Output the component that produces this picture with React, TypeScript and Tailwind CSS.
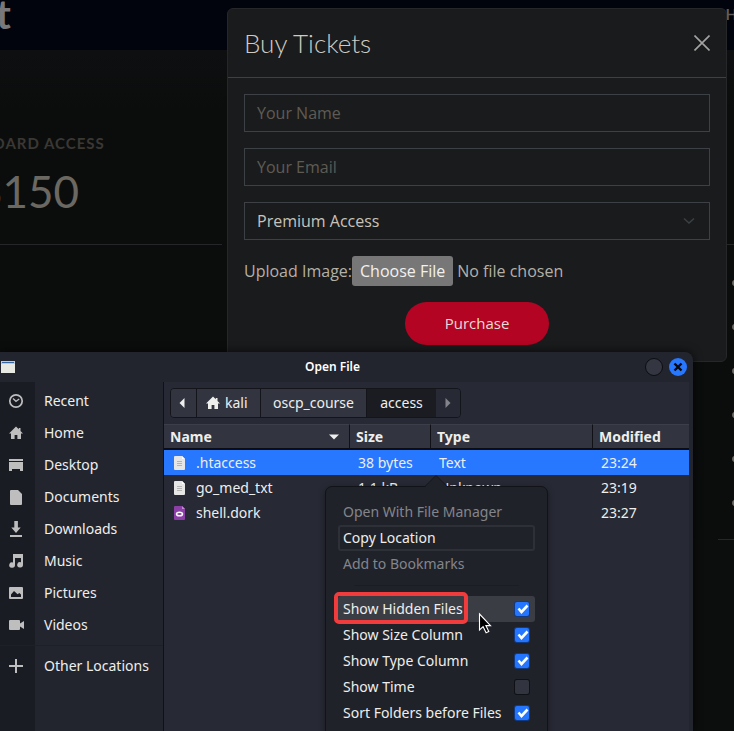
import React from "react";

const places = ["Recent", "Home", "Desktop", "Documents", "Downloads", "Music", "Pictures", "Videos"];

function PlaceIcon({ name }: { name: string }) {
  return (
    <svg aria-hidden="true" viewBox="0 0 16 16" className="size-4 shrink-0" fill="#bebebe">
      {name === "Recent" && (
        <g fill="none" stroke="#bebebe">
          <circle cx="8" cy="8" r="6.2" strokeWidth="1.7" />
          <path d="M5 5.5 8 8.3 11.2 6" strokeWidth="1.3" />
        </g>
      )}
      {name === "Home" && <path d="M8 1.5 1 8.4h2V14h3.6v-4h2.8v4H13V8.4h2L12.5 6V3h-1.7v1.3z" />}
      {name === "Desktop" && <path d="M1 2h14v2H1zM1 5h14v9h-3v-2H4v2H1z" />}
      {name === "Documents" && <path d="M3 1h7l4 4v10a1 1 0 0 1-1 1H3a1 1 0 0 1-1-1V2a1 1 0 0 1 1-1z" />}
      {name === "Downloads" && <path d="M6.3 0h3.6v6.5h2.8L8 12 3.3 6.5h3zM2 14h12v2H2z" />}
      {name === "Music" && <path d="M5 1h10v10.6a2.9 2.7 0 1 1-2-2.4V5H7v7a2.9 2.7 0 1 1-2-2.6z" />}
      {name === "Pictures" && (
        <path fillRule="evenodd" d="M2 2h12q1 0 1 1v10q0 1-1 1H2q-1 0-1-1V3q0-1 1-1zM3 12h10V9.5L11.3 8 9.6 9.2 6 6 3 9.5z" />
      )}
      {name === "Videos" && <path d="M2 3h9q1 0 1 1v2.6L16 4v8l-4-2.600V12q0 1-1 1H2q-1 0-1-1V4q0-1 1-1z" />}
      {name === "Other Locations" && <path d="M7 1h2v6h6v2H9v6H7V9H1V7h6z" />}
    </svg>
  );
}

function FileIcon({ purple }: { purple?: boolean }) {
  return (
    <svg aria-hidden="true" viewBox="0 0 12 14" className="h-3.5 w-3 shrink-0">
      <path d="M1 0h7l3 3v10q0 1-1 1H1q-1 0-1-1V1q0-1 1-1z" fill={purple ? "#8d3fa8" : "#e6e6e6"} />
      <path d="M8 0l3 3H8z" fill={purple ? "#c48bd6" : "#fff"} />
      {purple ? (
        <ellipse cx="5.500" cy="8" rx="3" ry="1.800" fill="none" stroke="#fff" strokeWidth="1.500" />
      ) : (
        <path d="M3 5.500h5M3 7.500h5M3 9.500h5" stroke="#b4b4b4" />
      )}
    </svg>
  );
}

function PlaceItem({ name }: { name: string }) {
  return (
    <button type="button" className="flex h-8 w-full items-center pl-2 text-left">
      <PlaceIcon name={name} />
      <span className="ml-5">{name}</span>
    </button>
  );
}

const files = [
  { name: ".htaccess", size: "38 bytes", type: "Text", modified: "23:24" },
  { name: "go_med_txt", size: "1.1 kB", type: "Unknown", modified: "23:19" },
  { name: "shell.dork", size: "", type: "", modified: "23:27" },
];

function CheckItem({ label, checked, active }: { label: string; checked?: boolean; active?: boolean }) {
  return (
    <label
      className={`flex h-[26px] items-center justify-between rounded-[3px] pr-1.5 pl-[5px] ${active ? "bg-[#3b3d45]" : ""}`}
    >
      {label}
      <span className="grid size-3.5 place-items-center">
        <input
          type="checkbox"
          defaultChecked={checked}
          className="peer col-start-1 row-start-1 size-3.5 appearance-none rounded-[2px] bg-[#323540] shadow-[0_0_0_1px_#101116] checked:bg-[#2475ff] checked:shadow-[0_0_0_1px_#123a80]"
        />
        <svg
          aria-hidden="true"
          viewBox="0 0 14 14"
          className="pointer-events-none invisible col-start-1 row-start-1 size-3.5 peer-checked:visible"
        >
          <path d="M3.500 6.500 6.500 10 12.500 3.500" fill="none" stroke="#fff" strokeWidth="2.600" />
        </svg>
      </span>
    </label>
  );
}

function ContextMenu() {
  return (
    <div className="absolute top-[134px] left-[325px] w-[223px] rounded-[7px] border border-[#121318] bg-[#20222a] px-3 pt-3 pb-6 shadow-[0_2px_6px_rgba(0,0,0,0.4)]">
      <svg aria-hidden="true" viewBox="0 0 22 12" className="absolute -top-3 left-[99px] h-3 w-[22px]">
        <path d="M0 12 11 1 22 12z" fill="#20222a" />
        <path d="M0 11.500 11 .5 22 11.500" fill="none" stroke="#121318" />
      </svg>
      <button type="button" className="flex h-[26px] w-full items-center px-[5px] text-[#84858a]">
        Open With File Manager
      </button>
      <button type="button" className="flex h-[26px] w-full items-center rounded-[3px] border-2 border-[#2d3037] px-[3px]">
        Copy Location
      </button>
      <button type="button" className="flex h-[26px] w-full items-center px-[5px] text-[#84858a]">
        Add to Bookmarks
      </button>
      <hr className="mx-4 mt-2 mb-2.5 border-[#1b1d24]" />
      <div className="relative">
        <CheckItem label="Show Hidden Files" checked active />
        <div className="pointer-events-none absolute -top-1 -left-1 h-8 w-[134px] rounded-[5px] border-4 border-[#f03c3c]" />
        <svg aria-hidden="true" viewBox="0 0 14 22" className="absolute top-4 left-[140px] h-[22px] w-3.5">
          <path d="M1.500 2v16l3.600-3.300 3 6 2.700-1.300-2.900-5.800h4.600z" fill="#000" stroke="#fff" strokeWidth="1.100" />
        </svg>
      </div>
      <CheckItem label="Show Size Column" checked />
      <CheckItem label="Show Type Column" checked />
      <CheckItem label="Show Time" />
      <CheckItem label="Sort Folders before Files" checked />
    </div>
  );
}

function FileDialog() {
  const crumb = "flex items-center border-r border-[#14151a] bg-[#323540]";
  const head = "border-t border-b-2 border-t-[#3c3f49] border-b-[#0c0d12] px-1.5 py-0";
  return (
    <section
      aria-label="Open File"
      className="absolute top-[352px] right-[41px] bottom-0 left-0 flex flex-col rounded-tr-lg bg-[#23252e] font-['Noto_Sans',sans-serif] text-sm text-[#eeeeec] shadow-[0_0_10px_rgba(0,0,0,0.7)]"
    >
      <header className="flex h-[30px] shrink-0 items-center pr-1.5">
        <svg aria-hidden="true" viewBox="0 0 16 12" className="h-3 w-4">
          <path d="M1 0h14v12H1z" fill="#e9e9e4" />
          <path d="M1 0h14v3H1z" fill="#b9cce6" />
          <path d="M2 1h12v1H2z" fill="#3465a4" />
        </svg>
        <h2 className="flex-1 pl-1 text-center text-xs font-semibold text-white">Open File</h2>
        <button
          type="button"
          aria-label="Maximize"
          className="mr-1.5 size-[18px] rounded-full border border-[#0c0d10] bg-[#343741]"
        />
        <button type="button" aria-label="Close" className="grid size-[18px] place-items-center rounded-full bg-[#2777ff]">
          <svg aria-hidden="true" viewBox="0 0 10 10" className="size-2.5">
            <path d="M1.500 1.500l7 7m0-7-7 7" stroke="#05070c" strokeWidth="2.400" />
          </svg>
        </button>
      </header>
      <div className="flex min-h-0 flex-1 pr-1">
        <nav className="w-[164px] shrink-0 border-r border-[#101116] bg-linear-to-r from-[#1a1c23] from-[35px] to-[#23252e] to-[35px] pt-[3px]">
          {places.map((p) => (
            <PlaceItem key={p} name={p} />
          ))}
          <hr className="mt-1 mb-1 border-[#1e2027]" />
          <PlaceItem name="Other Locations" />
        </nav>
        <main className="min-w-0 flex-1 bg-[#272934]">
          <div className="flex h-[42px] items-center px-1.5">
            <div className="flex h-[30px] overflow-hidden rounded-[4px] border border-[#14151a]">
              <button type="button" aria-label="Back" className={`${crumb} w-[26px] justify-center`}>
                <svg aria-hidden="true" viewBox="0 0 6 10" className="mr-1 h-2.5 w-1.5">
                  <path d="M5.500 0v10L.5 5z" fill="#eeeeec" />
                </svg>
              </button>
              <button type="button" className={`${crumb} w-16 gap-1 pl-2`}>
                <svg aria-hidden="true" viewBox="0 0 16 16" className="size-4">
                  <path d="M8 1.500 1 8.400h2V14h3.600v-4h2.800v4H13V8.400h2L12.500 6V3h-1.700v1.300z" fill="#eeeeec" />
                </svg>
                kali
              </button>
              <button type="button" className={`${crumb} w-[106px] justify-center`}>oscp_course</button>
              <button type="button" className="w-[69px] bg-[#1a1c22]">access</button>
              <button type="button" aria-label="Forward" className="grid w-6 place-items-center bg-[#272934]">
                <svg aria-hidden="true" viewBox="0 0 6 10" className="h-2.5 w-1.5">
                  <path d="M.5 0v10l5-5z" fill="#84858a" />
                </svg>
              </button>
            </div>
          </div>
          <table className="w-full table-fixed border-separate border-spacing-0 text-left">
            <colgroup>
              <col className="w-[186px]" />
              <col className="w-[81px]" />
              <col />
              <col className="w-[96px]" />
            </colgroup>
            <thead>
              <tr className="h-[26px] bg-[#323540]">
                <th className={`${head} border-r border-r-[#101116]`}>
                  <span className="flex items-center justify-between">
                    Name
                    <svg aria-hidden="true" viewBox="0 0 10 6" className="mr-1 h-1.5 w-2.5">
                      <path d="M0 .5h10L5 5.500z" fill="#eeeeec" />
                    </svg>
                  </span>
                </th>
                <th className={`${head} border-r border-r-[#101116]`}>Size</th>
                <th className={`${head} border-r border-r-[#101116]`}>Type</th>
                <th className={head}>Modified</th>
              </tr>
            </thead>
            <tbody>
              {files.map((f, i) => (
                <tr key={f.name} className={`h-[25px] ${i === 0 ? "bg-[#2777ff]" : ""}`}>
                  <td className="py-0 pl-2.5">
                    <span className="flex items-center gap-2.5">
                      <FileIcon purple={i === 2} />
                      {f.name}
                    </span>
                  </td>
                  <td className="py-0 pl-2">{f.size}</td>
                  <td className="py-0 pl-2">{f.type}</td>
                  <td className="py-0 pl-2">{f.modified}</td>
                </tr>
              ))}
            </tbody>
          </table>
        </main>
      </div>
      <ContextMenu />
    </section>
  );
}

function TicketModal() {
  const field =
    "block h-[38px] w-full border border-[#3d4145] bg-transparent px-3 text-base text-[#c8c3ba] placeholder:text-[#5f5b54]";
  return (
    <section
      aria-label="Buy Tickets"
      className="absolute top-2 right-[7px] left-[227px] rounded-md border border-[#252729] bg-[#1a1b1d] font-['Open_Sans',sans-serif] text-[#b5b0a7]"
    >
      <header className="flex h-[69px] items-center justify-between border-b border-[#3d4145] px-4">
        <h1 className="font-[Lato,sans-serif] text-[26px] leading-9 font-light text-[#d0cbc2]">Buy Tickets</h1>
        <button type="button" aria-label="Close">
          <svg aria-hidden="true" viewBox="0 0 16 16" className="size-4">
            <path d="M.5.5l15 15m0-15-15 15" stroke="#a3a3a2" strokeWidth="1.600" />
          </svg>
        </button>
      </header>
      <form className="flex flex-col gap-4 p-4" onSubmit={(e) => e.preventDefault()}>
        <input aria-label="Your Name" placeholder="Your Name" className={field} />
        <input aria-label="Your Email" type="email" placeholder="Your Email" className={field} />
        <div className="grid items-center">
          <select aria-label="Ticket type" className={`${field} col-start-1 row-start-1 appearance-none`}>
            <option>Premium Access</option>
          </select>
          <svg
            aria-hidden="true"
            viewBox="0 0 12 8"
            className="pointer-events-none col-start-1 row-start-1 mr-[15px] h-2 w-3 justify-self-end"
          >
            <path d="M1 1.500 6 6l5-4.500" fill="none" stroke="#3b4044" strokeWidth="1.500" />
          </svg>
        </div>
        <div className="flex h-[30px] items-center">
          <label htmlFor="upload">Upload Image:</label>
          <input
            id="upload"
            type="file"
            className="min-w-0 flex-1 file:mr-1 file:h-[30px] file:rounded-[3px] file:bg-[#777777] file:px-2 file:text-[#f2f1ef]"
          />
        </div>
        <button type="submit" className="h-[43px] w-36 self-center rounded-full bg-[#b40424] text-[15px] text-[#e5dcd8]">
          Purchase
        </button>
      </form>
    </section>
  );
}

function PriceCard({ name, price }: { name: string; price: string }) {
  return (
    <article className="w-[388px] shrink-0 text-center">
      <h3 className="text-[15px] leading-5 font-bold tracking-[1px] text-[#3b3834]">{name}</h3>
      <p className="mt-2.5 h-[81px] text-[44px] leading-[56px] text-[#6b6862]">{price}</p>
      <hr className="border-[#242628]" />
      <ul className="h-[294px] pt-4 pl-3.5">
        {[0, 1, 2, 3, 4, 5].map((i) => (
          <li key={i} className="flex h-11 items-center">
            <span className="size-1.5 rounded-full bg-[#6b6862]" />
          </li>
        ))}
      </ul>
      <hr className="border-[#242628]" />
    </article>
  );
}

export default function App() {
  return (
    <div className="relative h-screen overflow-hidden bg-[#0c0e0d] font-[Lato,sans-serif]">
      <header className="flex h-[50px] items-start justify-between bg-[#01030d]">
        <span className="-ml-1 text-[40px] leading-7 font-bold text-[#77777c]">t</span>
        <a href="#home" className="-mr-8 pt-1 text-[15px] leading-5 font-bold text-[#5f5d5b]">
          Home
        </a>
      </header>
      <div className="-ml-[166px] flex gap-[54px] bg-linear-to-b from-[#0e0f11] to-[#0b0d0c] to-[60px] pt-[83px]">
        <PriceCard name="STANDARD ACCESS" price="$150" />
        <PriceCard name="PREMIUM ACCESS" price="$350" />
        <PriceCard name="VIP ACCESS" price="$550" />
      </div>
      <TicketModal />
      <FileDialog />
    </div>
  );
}
